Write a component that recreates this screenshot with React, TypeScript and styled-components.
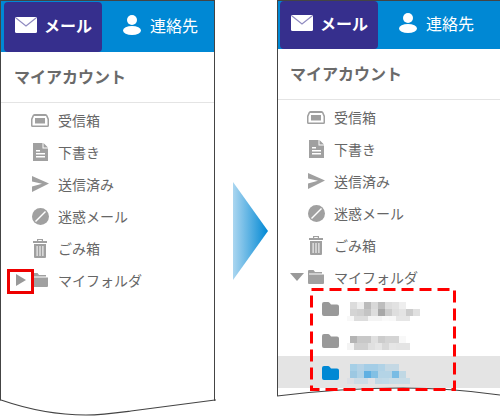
import styled, { createGlobalStyle } from 'styled-components';

const GlobalStyle = createGlobalStyle`
  html, body {
    margin: 0;
    padding: 0;
    background: #fff;
  }
  body {
    font-family: "Noto Sans CJK JP", "Liberation Sans", sans-serif;
  }
`;

const Stage = styled.div`
  width: 500px;
  height: 416px;
  display: flex;
  overflow: hidden;
  background: #fff;
`;

const Panel = styled.section<{ $shift: number; $width: number; $closed?: boolean }>`
  --shift: ${(p) => p.$shift}px;
  position: relative;
  flex: none;
  box-sizing: border-box;
  width: ${(p) => p.$width}px;
  height: 416px;
  border: solid #444;
  border-width: 1px ${(p) => (p.$closed ? 1 : 0)}px 0 1px;
`;

const TabBar = styled.div<{ $height: number; $gap: number }>`
  box-sizing: border-box;
  height: ${(p) => p.$height}px;
  padding: ${(p) => p.$gap}px 0 0 var(--shift);
  background: #0088d4;
  display: flex;
`;

const Tab = styled.div<{ $active?: boolean }>`
  box-sizing: border-box;
  flex: none;
  display: flex;
  align-items: center;
  height: 100%;
  padding-bottom: 5px;
  margin-left: ${(p) => (p.$active ? 2 : 0)}px;
  width: ${(p) => (p.$active ? 98 : 100)}px;
  padding-left: ${(p) => (p.$active ? 11 : 21)}px;
  gap: ${(p) => (p.$active ? 7 : 9)}px;
  background: ${(p) => (p.$active ? '#362f8d' : 'transparent')};
  border-radius: ${(p) => (p.$active ? '4px' : 0)};
  color: #fff;
  font-size: 16px;
  font-weight: ${(p) => (p.$active ? 700 : 400)};
`;

const Heading = styled.div`
  box-sizing: border-box;
  height: 51px;
  padding: 0 0 3px calc(var(--shift) + 12px);
  display: flex;
  align-items: center;
  border-bottom: 1px solid #e4e4e4;
  color: #6a6a6a;
  font-size: 16px;
  font-weight: 700;
`;

const List = styled.div`
  padding-top: 1px;
`;

const Row = styled.div<{ $selected?: boolean; $sub?: boolean }>`
  box-sizing: border-box;
  height: 32px;
  display: flex;
  align-items: center;
  padding-left: calc(var(--shift) + ${(p) => (p.$sub ? 44 : 13)}px);
  color: #666;
  font-size: 14px;
  ${(p) => p.$selected && `background: #e4e4e4; margin-top: -1px; padding-top: 2px;`}
`;

const CaretSlot = styled.span`
  position: relative;
  flex: none;
  width: 16px;
  display: flex;
  align-items: center;
`;

const Caret = styled.span<{ $open?: boolean }>`
  width: 0;
  height: 0;
  border-style: solid;
  border-color: transparent;
  ${(p) =>
    p.$open
      ? `border-width: 8px 7px 0 7px; border-top-color: #999; margin-left: -1px;`
      : `border-width: 6px 0 6px 10px; border-left-color: #999; margin-left: 1px;`}
`;

const IconSlot = styled.span`
  flex: none;
  width: 18px;
  margin-right: 9px;
  display: flex;
  align-items: center;
  justify-content: center;
`;

const FolderSlot = styled.span`
  flex: none;
  width: 17px;
  margin-right: 8px;
  display: flex;
`;

const HighlightBox = styled.span`
  position: absolute;
  left: -8px;
  top: -5px;
  box-sizing: border-box;
  width: 27px;
  height: 25px;
  border: 3px solid #ee0000;
`;

const Arrow = styled.svg`
  flex: none;
  width: 35px;
  height: 98px;
  margin: 182px 9px 0 18px;
`;

const Wave = styled.svg`
  position: absolute;
  left: -1px;
  bottom: 0;
  display: block;
`;

const DashedBox = styled.svg`
  position: absolute;
  left: 32px;
  top: 287px;
  display: block;
`;

const Mosaic = styled.svg`
  display: block;
  flex: none;
`;

const MailIcon = () => (
  <svg width="22" height="16" viewBox="0 0 22 16">
    <rect x="0" y="0" width="22" height="16" rx="1.5" fill="#fff" />
    <path d="M1 1 L11 9 L21 1" fill="none" stroke="#8f8ac0" strokeWidth="1.2" />
  </svg>
);

const PersonIcon = () => (
  <svg width="18" height="20" viewBox="0 0 18 20">
    <circle cx="9" cy="5" r="5" fill="#fff" />
    <ellipse cx="9" cy="15.5" rx="9" ry="4.5" fill="#fff" />
  </svg>
);

const InboxIcon = () => (
  <svg width="18" height="13" viewBox="0 0 18 13">
    <path
      fill="#a0a0a0"
      fillRule="evenodd"
      d="M3.5 0H14.5Q16 0 16.5 1.5L18 5V11.5Q18 13 16.5 13H1.5Q0 13 0 11.5V5L1.5 1.5Q2 0 3.5 0ZM1.5 5.5V11.5H16.5V5.5L15 2H3Z"
    />
    <rect x="4" y="4" width="10" height="5.5" fill="#a0a0a0" />
  </svg>
);

const DocIcon = () => (
  <svg width="15" height="18" viewBox="0 0 15 18">
    <path
      fill="#a0a0a0"
      fillRule="evenodd"
      d="M0 0H9.5V5.5H15V18H0ZM10.5 0L15 4.5H10.5ZM3 7V8.5H7V7ZM3 10V11.5H12V10ZM3 13V14.5H12V13Z"
    />
  </svg>
);

const SendIcon = () => (
  <svg width="17" height="16" viewBox="0 0 17 16">
    <path fill="#a0a0a0" d="M0 0L17 7.5L0 16V10.5L10 7.8L0 5.5Z" />
  </svg>
);

const BlockIcon = () => (
  <svg width="17" height="17" viewBox="0 0 17 17">
    <circle cx="8.5" cy="8.5" r="8.5" fill="#a0a0a0" />
    <path d="M13.5 3.5L3.5 13.5" stroke="#fff" strokeWidth="1.4" />
  </svg>
);

const TrashIcon = () => (
  <svg width="14" height="19" viewBox="0 0 14 19">
    <path
      fill="#a0a0a0"
      fillRule="evenodd"
      d="M4 0H10V2H14V4H0V2H4ZM5.2 1V2H8.8V1ZM1 5H13V18Q13 19 12 19H2Q1 19 1 18ZM3.6 7V17H4.6V7ZM6.5 7V17H7.5V7ZM9.4 7V17H10.4V7Z"
    />
  </svg>
);

const OpenFolderIcon = () => (
  <svg width="16" height="14" viewBox="0 0 16 14">
    <path fill="#a0a0a0" d="M0 1Q0 0 1 0H5.5L7 2H14V3.5H1V4.5H16V13Q16 14 15 14H1Q0 14 0 13Z" />
  </svg>
);

const FolderIcon = ({ color }: { color: string }) => (
  <svg width="17" height="14" viewBox="0 0 17 14">
    <path
      fill={color}
      d="M0 2Q0 0 2 0H6Q7 0 8 1.3L9 2.5H15Q17 2.5 17 4.5V12Q17 14 15 14H2Q0 14 0 12Z"
    />
  </svg>
);

type MosaicRow = { x: number; h: number; cells: string[] };

const folderMosaics: { color: string; top: number; rows: MosaicRow[]; selected?: boolean }[] = [
  {
    color: '#999',
    top: 9,
    rows: [
      { x: 3, h: 7, cells: ['#dcdcdc', '#eeeeee', '#bbbbbb', '#d8d8d8', '#bdbdbd', '#dddddd', '#e2e2e2', '#eeeeee'] },
      { x: 3, h: 7, cells: ['#d4d4d4', '#d0d0d0', '#c4c4c4', '#dddddd', '#a8a8a8', '#cccccc', '#dedede', '#e4e4e4', '#cccccc', '#e0e0e0'] },
      { x: 0, h: 5, cells: ['#f8f8f8', '#dddddd', '#dddddd', '#f4f4f4', '#f4f4f4', '#fafafa', '#f8f8f8', '#e6e6e6', '#e6e6e6'] },
    ],
  },
  {
    color: '#999',
    top: 11,
    rows: [
      { x: 3, h: 7, cells: ['#b4b4b4', '#c8c8c8', '#c8c8c8', '#e0e0e0', '#cccccc', '#d4d4d4', '#d4d4d4', '#f8f8f8'] },
      { x: 0, h: 7, cells: ['#f4f4f4', '#d0d0d0', '#d0d0d0', '#e0e0e0', '#e6e6e6', '#d8d8d8', '#e6e6e6', '#e4e4e4', '#e4e4e4'] },
    ],
  },
  {
    color: '#0088d4',
    top: 7,
    selected: true,
    rows: [
      { x: 3, h: 7, cells: ['#a6cfe6', '#b4d2e6', '#a4cde6', '#a4cde6', '#b0d2e6', '#c4d8e4', '#c4d8e4'] },
      { x: 3, h: 7, cells: ['#9cc8e2', '#b0d2e6', '#5fb0e2', '#82c0e4', '#b4d4e6', '#b4d4e6', '#78bce4', '#c0d8e4'] },
      { x: 0, h: 6, cells: ['#dcdfe4', '#ccdce6', '#ccdce6', '#e0e2e6', '#c0d8e6', '#c0dae8', '#c8dce6', '#c8dce6', '#c8dce6'] },
    ],
  },
];

const items = [
  { label: '受信箱', icon: <InboxIcon /> },
  { label: '下書き', icon: <DocIcon /> },
  { label: '送信済み', icon: <SendIcon /> },
  { label: '迷惑メール', icon: <BlockIcon /> },
  { label: 'ごみ箱', icon: <TrashIcon /> },
];

const Mailbox = ({ barHeight, barGap, open }: { barHeight: number; barGap: number; open?: boolean }) => (
  <>
    <TabBar $height={barHeight} $gap={barGap}>
      <Tab $active>
        <MailIcon />
        メール
      </Tab>
      <Tab>
        <PersonIcon />
        連絡先
      </Tab>
    </TabBar>
    <Heading>マイアカウント</Heading>
    <List>
      {items.map((item) => (
        <Row key={item.label}>
          <CaretSlot />
          <IconSlot>{item.icon}</IconSlot>
          {item.label}
        </Row>
      ))}
      <Row>
        <CaretSlot>
          <Caret $open={open} />
          {!open && <HighlightBox />}
        </CaretSlot>
        <IconSlot>
          <OpenFolderIcon />
        </IconSlot>
        マイフォルダ
      </Row>
      {open &&
        folderMosaics.map((folder, i) => (
          <Row key={i} $sub $selected={folder.selected}>
            <FolderSlot>
              <FolderIcon color={folder.color} />
            </FolderSlot>
            {/* folder names are pixelated in the picture */}
            <Mosaic width="90" height="32">
              {folder.rows.map((row, r) =>
                row.cells.map((c, j) => (
                  <rect key={`${r}-${j}`} x={row.x + j * 7} y={folder.top + r * 7} width="7" height={row.h} fill={c} />
                ))
              )}
            </Mosaic>
          </Row>
        ))}
    </List>
  </>
);

export default function App() {
  return (
    <Stage>
      <GlobalStyle />
      <Panel $shift={1} $width={215} $closed>
        <Mailbox barHeight={51} barGap={1} />
        <Wave width="217" height="17" viewBox="0 0 217 17">
          <path d="M0 1.5 C30 11 60 16 86 16 C102 16 116 14 131 12 L215 1.5 V17 H0 Z" fill="#fff" />
          <path d="M1 1 C30 11 60 16 86 16 C102 16 116 14 131 12 L215 1" fill="none" stroke="#444" strokeWidth="1.2" />
          <path d="M215 0 V2" stroke="#444" strokeWidth="1" />
        </Wave>
      </Panel>
      <Arrow viewBox="0 0 35 98">
        <defs>
          <linearGradient id="arrowFill" x1="0" x2="1" y1="0" y2="0">
            <stop offset="0" stopColor="#abd6f0" />
            <stop offset="1" stopColor="#0088d4" />
          </linearGradient>
        </defs>
        <polygon points="0,0 35,49 0,98" fill="url(#arrowFill)" />
      </Arrow>
      <Panel $shift={0} $width={223}>
        <Mailbox barHeight={48} barGap={0} open />
        <Wave width="223" height="29" viewBox="0 0 223 29">
          <path d="M0 9 C40 4 90 1 126 1 C160 1 195 4 223 8 V29 H0 Z" fill="#fff" />
          <path d="M0 9 C40 4 90 1 126 1 C160 1 195 4 223 8" fill="none" stroke="#444" strokeWidth="1.2" />
        </Wave>
        <DashedBox width="146" height="103">
          <rect
            x="1.5"
            y="1.5"
            width="143"
            height="100"
            fill="none"
            stroke="#ff0000"
            strokeWidth="3"
            strokeDasharray="12 6"
          />
        </DashedBox>
      </Panel>
    </Stage>
  );
}
